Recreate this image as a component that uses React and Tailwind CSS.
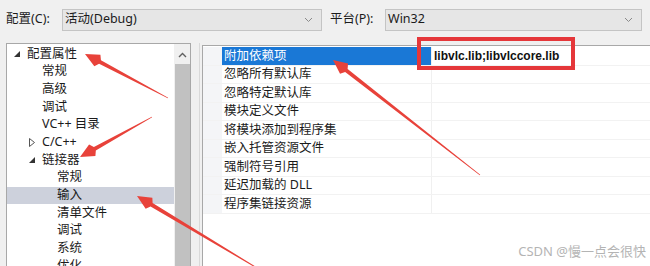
import React from 'react'

const treeItems = [
  { label: '配置属性', indent: 0, arrow: 'open' },
  { label: '常规', indent: 1 },
  { label: '高级', indent: 1 },
  { label: '调试', indent: 1 },
  { label: 'VC++ 目录', indent: 1 },
  { label: 'C/C++', indent: 1, arrow: 'closed' },
  { label: '链接器', indent: 1, arrow: 'open' },
  { label: '常规', indent: 2 },
  { label: '输入', indent: 2, selected: true },
  { label: '清单文件', indent: 2 },
  { label: '调试', indent: 2 },
  { label: '系统', indent: 2 },
  { label: '优化', indent: 2 },
]

const props = [
  '附加依赖项',
  '忽略所有默认库',
  '忽略特定默认库',
  '模块定义文件',
  '将模块添加到程序集',
  '嵌入托管资源文件',
  '强制符号引用',
  '延迟加载的 DLL',
  '程序集链接资源',
]

function Chevron() {
  return (
    <svg width="9" height="6" viewBox="0 0 9 6" className="text-[#8a8a8a]">
      <path d="M1 1 L4.5 4.5 L8 1" fill="none" stroke="currentColor" strokeWidth="1" />
    </svg>
  )
}

function Dropdown({ value, className }) {
  return (
    <div className={`h-[22px] flex items-center justify-between pl-[2px] pr-[8px] bg-[#e6e6e6] border border-[#c4c4c4] ${className}`}>
      <span>{value}</span>
      <Chevron />
    </div>
  )
}

function arrowPoints([x1, y1], [x2, y2]) {
  const dx = x2 - x1
  const dy = y2 - y1
  const len = Math.hypot(dx, dy)
  const ux = dx / len
  const uy = dy / len
  const nx = -uy
  const ny = ux
  const L = 17
  const hw = 6.5
  const w0 = 0.4
  const w1 = 2
  const bx = x2 - ux * L
  const by = y2 - uy * L
  const pts = [
    [x1 + nx * w0, y1 + ny * w0],
    [bx + nx * w1, by + ny * w1],
    [bx + ux * 3 + nx * hw, by + uy * 3 + ny * hw],
    [x2, y2],
    [bx + ux * 3 - nx * hw, by + uy * 3 - ny * hw],
    [bx - nx * w1, by - ny * w1],
    [x1 - nx * w0, y1 - ny * w0],
  ]
  return pts.map((p) => p.join(',')).join(' ')
}

const arrows = [
  [[168, 98], [85, 54]],
  [[152, 117], [80, 157]],
  [[262, 271], [137, 196]],
  [[480, 175], [333, 60]],
]

const indentPad = ['pl-[7px]', 'pl-[22px]', 'pl-[37px]']

export default function App() {
  return (
    <div className="relative w-[650px] h-[266px] overflow-hidden bg-[#f0f0f0] text-[12.5px] text-[#1b1b1b] font-['Noto_Sans','Noto_Sans_CJK_SC',sans-serif] leading-none">
      {/* top bar */}
      <div className="flex items-center h-[38px] pt-[1px] pl-[6px]">
        <span className="w-[56px]">配置(C):</span>
        <Dropdown value="活动(Debug)" className="w-[260px]" />
        <span className="ml-[8px] w-[55px]">平台(P):</span>
        <Dropdown value="Win32" className="w-[257px]" />
      </div>

      <div className="flex mt-[5px] h-[230px]">
        {/* tree */}
        <div className="ml-[6px] w-[185px] flex bg-white border border-[#a8a8a8]">
          <div className="flex-1 pt-[1px]">
            {treeItems.map((t, i) => (
              <div
                key={i}
                className={`h-[17.7px] flex items-center ${indentPad[t.indent]} ${t.selected ? 'bg-[#cdd1dc]' : ''}`}
              >
                <span className="w-[13px] flex items-center">
                  {t.arrow === 'open' && (
                    <svg width="6" height="6" viewBox="0 0 6 6">
                      <path d="M6 0 L6 6 L0 6 Z" fill="#333" />
                    </svg>
                  )}
                  {t.arrow === 'closed' && (
                    <svg width="6" height="9" viewBox="0 0 6 9">
                      <path d="M0.5 0.5 L5.5 4.5 L0.5 8.5 Z" fill="none" stroke="#555" />
                    </svg>
                  )}
                </span>
                <span>{t.label}</span>
              </div>
            ))}
          </div>
          <div className="w-[16px] bg-[#f0f0f0] flex flex-col items-center">
            <svg width="9" height="6" viewBox="0 0 9 6" className="mt-[8px]">
              <path d="M1 5 L4.5 1.5 L8 5" fill="none" stroke="#606060" strokeWidth="1.4" />
            </svg>
            <div className="mt-[6px] w-[15px] flex-1 bg-[#c1c1c1]" />
          </div>
        </div>

        <div className="ml-[8px] w-[1px] bg-[#d9d9d9]" />

        {/* property grid */}
        <div className="ml-[2px] flex-1 mt-[2px] bg-white border-l border-t border-[#a8a8a8]">
          <div className="pt-[1px]">
            {props.map((p, i) => (
              <div key={i} className="flex h-[18.5px] border-b border-[#f2f2f2]">
                <div className="w-[19px] bg-[#f4f5f7]" />
                <div
                  className={`w-[209px] flex items-center pl-[2px] ${i === 0 ? 'bg-[#1a78d6] text-white' : ''}`}
                >
                  {p}
                </div>
                <div className="flex-1 flex items-center pl-[2px] border-l border-[#f0f0f0]">
                  {i === 0 && (
                    <span className="font-bold text-[12px] text-[#111] font-['Liberation_Sans','Noto_Sans',sans-serif]">
                      libvlc.lib;libvlccore.lib
                    </span>
                  )}
                </div>
              </div>
            ))}
          </div>
        </div>
      </div>

      {/* annotation: red box */}
      <div className="absolute left-[417px] top-[37px] w-[158px] h-[33px] border-[4px] border-[#e5373a]" />

      {/* annotation: arrows */}
      <svg className="absolute inset-0 pointer-events-none" width="650" height="266">
        {arrows.map(([a, b], i) => (
          <polygon key={i} points={arrowPoints(a, b)} fill="#e8423a" />
        ))}
      </svg>

      {/* watermark */}
      <div className="absolute right-[4px] bottom-[8px] text-[13px] text-[#b4b4b4] font-['Noto_Sans','Noto_Sans_CJK_SC',sans-serif]">
        CSDN @慢一点会很快
      </div>
    </div>
  )
}
